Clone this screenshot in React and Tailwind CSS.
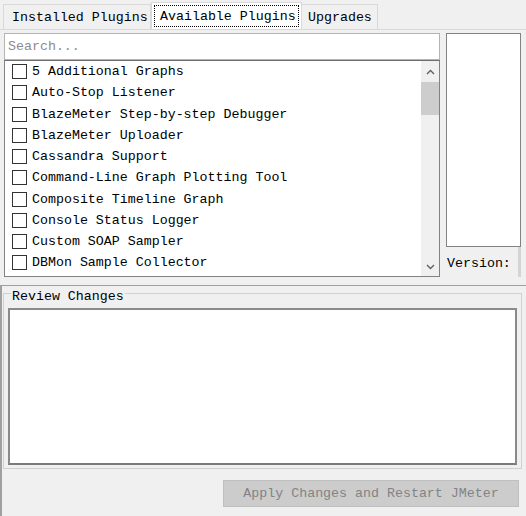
import { useState } from "react";

const plugins = [
  "5 Additional Graphs",
  "Auto-Stop Listener",
  "BlazeMeter Step-by-step Debugger",
  "BlazeMeter Uploader",
  "Cassandra Support",
  "Command-Line Graph Plotting Tool",
  "Composite Timeline Graph",
  "Console Status Logger",
  "Custom SOAP Sampler",
  "DBMon Sample Collector",
];

function Chevron({ up }) {
  return (
    <svg width="9" height="6" viewBox="0 0 9 6">
      <polyline
        points={up ? "1,5 4.5,1.5 8,5" : "1,1 4.5,4.5 8,1"}
        fill="none"
        stroke="#606060"
        strokeWidth="1.4"
      />
    </svg>
  );
}

function App() {
  const [checked, setChecked] = useState({});

  const toggle = (name) => {
    setChecked((previous) => ({
      ...previous,
      [name]: !previous[name],
    }));
  };

  return (
    <div
      className="flex h-[516px] w-[526px] flex-col overflow-hidden bg-[#f0f0f0] text-[13.3px] text-black"
      style={{ fontFamily: '"Liberation Mono", "DejaVu Sans Mono", monospace' }}
    >
      {/* tabs */}
      <div className="flex h-[29px] items-end pl-[3px]">
        <div className="flex h-[25px] w-[148px] items-center border border-b-0 border-[#d9d9d9] pl-[8px] pt-[2px]">
          Installed Plugins
        </div>
        <div className="h-[27px] w-[151px] border border-b-0 border-[#d9d9d9] bg-white p-[2px]">
          <div className="flex h-full items-center border border-dotted border-black pl-[5px] pt-[1px]">
            Available Plugins
          </div>
        </div>
        <div className="flex h-[25px] w-[76px] items-center border border-b-0 border-l-0 border-[#d9d9d9] pl-[6px] pt-[2px]">
          Upgrades
        </div>
      </div>

      {/* tab content */}
      <div className="flex h-[255px] gap-[6px] border-t border-[#d9d9d9] pl-[4px] pr-[5px] pt-[3px]">
        <div className="flex w-[436px] flex-col">
          <div className="flex h-[27px] items-center border border-[#b4b4b4] bg-white pl-[3px] pt-[1px] text-[#8c8c8c]">
            Search...
          </div>
          <div className="flex h-[217px] border border-[#828282] border-t-[#6e6e6e] bg-white">
            <div className="flex-1">
              {plugins.map((name) => (
                <div
                  key={name}
                  onClick={() => toggle(name)}
                  className="flex h-[21.25px] items-center gap-[5px] pl-[7px]"
                >
                  <div className="flex h-[15px] w-[15px] items-center justify-center border border-[#333333] bg-white text-[11px] leading-none">
                    {checked[name] ? "✓" : ""}
                  </div>
                  <span className="pt-[1px]">{name}</span>
                </div>
              ))}
            </div>
            <div className="flex w-[18px] flex-col bg-[#f0f0f0]">
              <div className="flex h-[21px] items-center justify-center">
                <Chevron up />
              </div>
              <div className="h-[33px] bg-[#cdcdcd]" />
              <div className="flex-1" />
              <div className="flex h-[19px] items-center justify-center">
                <Chevron />
              </div>
            </div>
          </div>
        </div>

        <div className="flex w-[75px] flex-col">
          <div className="h-[214px] border border-[#828282] bg-white" />
          <div className="flex h-[30px] items-center border-r-[3px] border-[#d4d4d4] pl-[1px] pt-[3px]">
            Version:
          </div>
        </div>
      </div>

      {/* split divider */}
      <div className="mt-[1px] border-t border-[#a0a0a0]" />

      {/* review changes */}
      <div className="flex flex-1 flex-col border-l-2 border-[#a0a0a0] pl-[1px] pr-[4px] pt-[7px]">
        <div className="relative h-[176px] border border-[#d0d0d0] px-[4px] pb-[3px] pt-[14px]">
          <span className="absolute left-[7px] top-[-5px] bg-[#f0f0f0] px-[1px] leading-[16px]">
            Review Changes
          </span>
          <div className="h-full border-2 border-[#8a8a8a] border-b-[#7a7a7a] bg-white" />
        </div>
        <div className="flex justify-end pr-[3px] pt-[11px]">
          <button
            disabled
            className="h-[27px] w-[296px] border border-[#bfbfbf] bg-[#cccccc] pt-[1px] text-[#838383]"
          >
            Apply Changes and Restart JMeter
          </button>
        </div>
      </div>
    </div>
  );
}

export default App;
